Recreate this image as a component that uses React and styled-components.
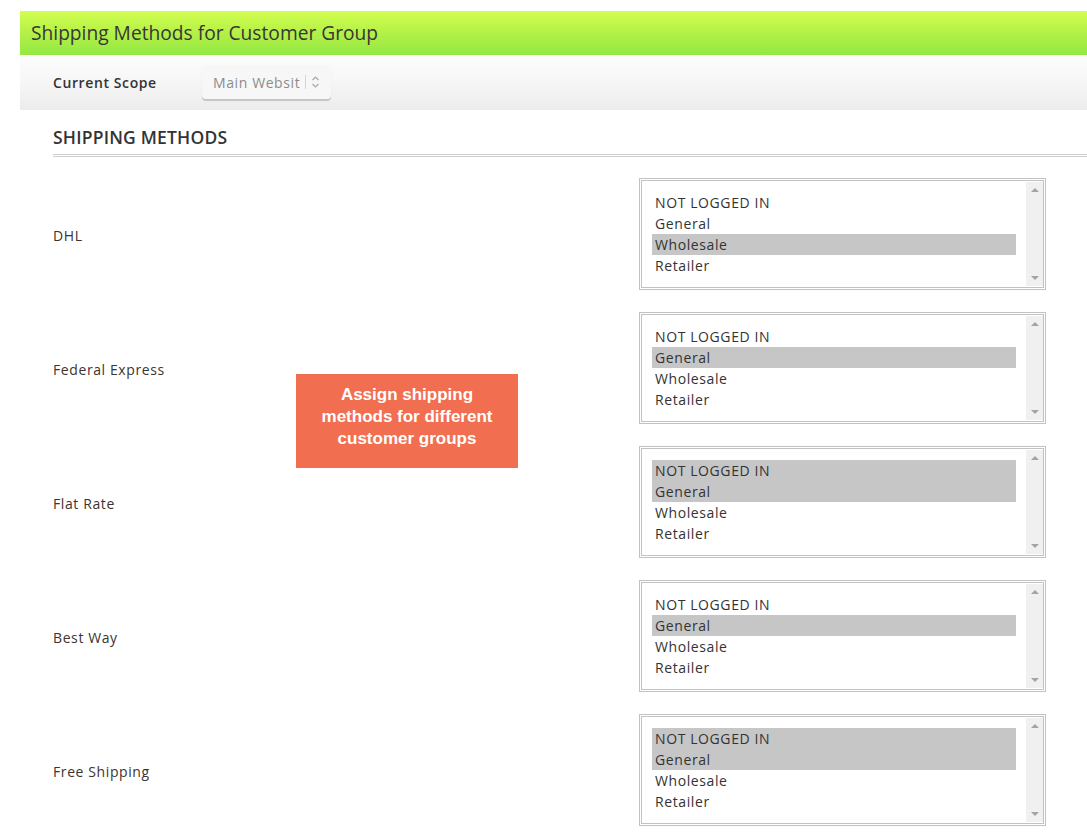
import React from "react";
import styled, { createGlobalStyle } from "styled-components";

const Global = createGlobalStyle`
  html, body { margin: 0; padding: 0; background: #fff; }
  body { font-family: "Open Sans", "Liberation Sans", sans-serif; color: #333; }
`;

const Page = styled.div`
  padding: 11px 0 0 20px;
  position: relative;
`;

const Header = styled.div`
  height: 44px;
  display: flex;
  align-items: center;
  padding-left: 11px;
  padding-bottom: 1px;
  box-sizing: border-box;
  background: linear-gradient(to bottom, #d3fe50 0%, #b6f248 45%, #93e843 100%);
  font-size: 19.2px;
  color: #3a3535;
`;

const ScopeBar = styled.div`
  height: 55px;
  display: flex;
  align-items: center;
  padding-left: 33px;
  background: linear-gradient(to bottom, #fdfdfd 0%, #f6f6f6 50%, #ececec 100%);
`;

const ScopeLabel = styled.span`
  font-weight: 600;
  font-size: 14px;
  letter-spacing: 0.6px;
  color: #333;
  width: 149px;
`;

const ScopeSelect = styled.div`
  width: 129px;
  height: 34px;
  box-sizing: border-box;
  display: flex;
  align-items: center;
  padding-left: 11px;
  margin-top: -1px;
  background: #f7f7f7;
  border-radius: 4px;
  box-shadow: 0 2px 1px rgba(0, 0, 0, 0.18);
  font-size: 14px;
  letter-spacing: 0.6px;
  color: #8c8c8c;
`;

const Sep = styled.span`
  width: 1px;
  height: 14px;
  background: #d6d6d6;
  margin: 0 5px 0 5px;
`;

const Section = styled.div`
  padding-left: 33px;
`;

const SectionTitle = styled.div`
  padding-top: 15px;
  height: 29px;
  font-size: 17.5px;
  letter-spacing: 0.2px;
  font-weight: 600;
  color: #333;
  text-transform: uppercase;
  border-bottom: 3px double #cfcfcf;
`;

const Rows = styled.div`
  display: flex;
  flex-direction: column;
  gap: 22px;
  padding-top: 21px;
`;

const Row = styled.div`
  display: grid;
  grid-template-columns: 586px 407px;
  align-items: center;
`;

const Label = styled.div`
  font-size: 14px;
  letter-spacing: 0.6px;
  color: #3c3430;
  padding-top: 3px;
`;

const ListBox = styled.div`
  height: 112px;
  box-sizing: border-box;
  border: 3px double #c2c2c2;
  display: flex;
  background: #fff;
`;

const Options = styled.div`
  flex: 1;
  padding: 11px 10px 0 10px;
`;

const Option = styled.div`
  height: 21px;
  line-height: 21px;
  font-size: 14px;
  letter-spacing: 0.6px;
  padding-left: 3px;
  color: #333;
  background: ${(p) => (p.$selected ? "#c6c6c6" : "transparent")};
`;

const Scroll = styled.div`
  width: 17px;
  margin: 1px 0;
  background: #f0f0f0;
  display: flex;
  flex-direction: column;
  justify-content: space-between;
  align-items: center;
  padding: 6px 0;
`;

const Arrow = styled.div`
  width: 0;
  height: 0;
  border-left: 4px solid transparent;
  border-right: 4px solid transparent;
  ${(p) =>
    p.$down
      ? "border-top: 4px solid #a3a3a3;"
      : "border-bottom: 4px solid #a3a3a3;"}
`;

const Callout = styled.div`
  position: absolute;
  left: 296px;
  top: 374px;
  width: 222px;
  height: 94px;
  box-sizing: border-box;
  background: #f26e50;
  color: #fff;
  font-family: "Liberation Sans", Arial, sans-serif;
  font-weight: 700;
  font-size: 17px;
  line-height: 22px;
  text-align: center;
  display: flex;
  align-items: center;
  justify-content: center;
  padding: 0 16px 8px;
`;

const groups = ["NOT LOGGED IN", "General", "Wholesale", "Retailer"];

const methods = [
  { name: "DHL", sel: ["Wholesale"] },
  { name: "Federal Express", sel: ["General"] },
  { name: "Flat Rate", sel: ["NOT LOGGED IN", "General"] },
  { name: "Best Way", sel: ["General"] },
  { name: "Free Shipping", sel: ["NOT LOGGED IN", "General"] },
];

const Chevrons = () => (
  <svg width="9" height="14" viewBox="0 0 9 14" fill="none" stroke="#a8a8a8" strokeWidth="1.2">
    <path d="M1.5 5 L4.5 2 L7.5 5" />
    <path d="M1.5 9 L4.5 12 L7.5 9" />
  </svg>
);

export default function App() {
  return (
    <>
      <Global />
      <Page>
        <Header>Shipping Methods for Customer Group</Header>
        <ScopeBar>
          <ScopeLabel>Current Scope</ScopeLabel>
          <ScopeSelect>
            Main Websit
            <Sep />
            <Chevrons />
          </ScopeSelect>
        </ScopeBar>
        <Section>
          <SectionTitle>Shipping Methods</SectionTitle>
          <Rows>
            {methods.map((m) => (
              <Row key={m.name}>
                <Label>{m.name}</Label>
                <ListBox>
                  <Options>
                    {groups.map((g) => (
                      <Option key={g} $selected={m.sel.includes(g)}>
                        {g}
                      </Option>
                    ))}
                  </Options>
                  <Scroll>
                    <Arrow />
                    <Arrow $down />
                  </Scroll>
                </ListBox>
              </Row>
            ))}
          </Rows>
        </Section>
        <Callout>Assign shipping methods for different customer groups</Callout>
      </Page>
    </>
  );
}
